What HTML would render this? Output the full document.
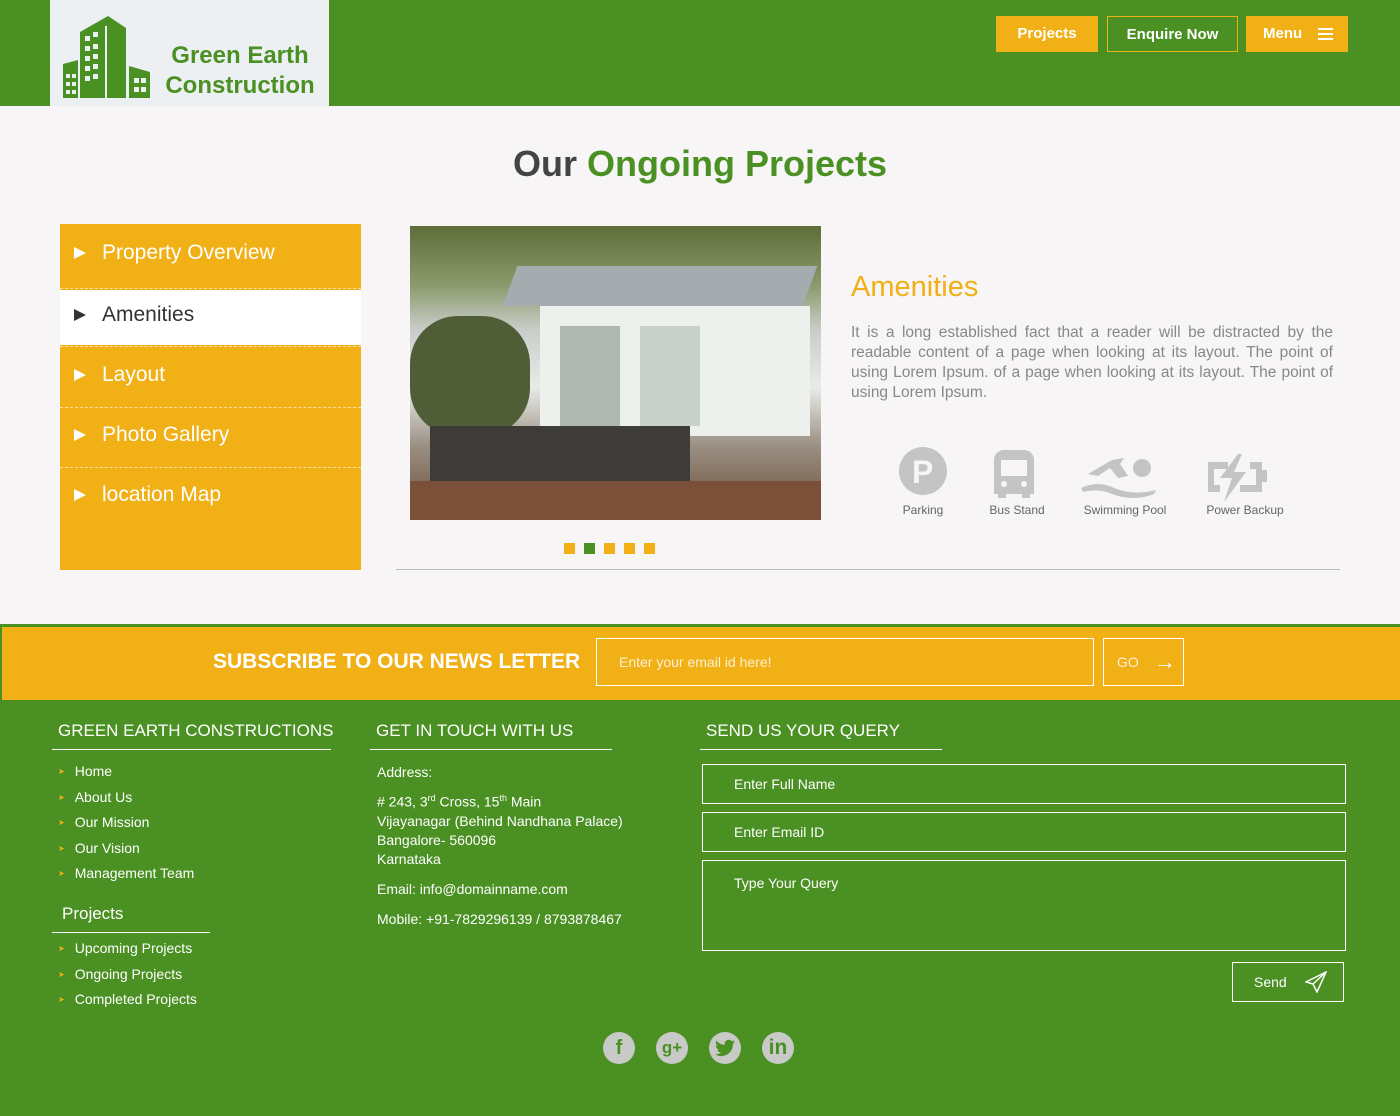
<!DOCTYPE html>
<html><head><meta charset="utf-8"><style>
*{margin:0;padding:0;box-sizing:border-box}
body{width:1400px;height:1116px;background:#f7f5f6;font-family:"Liberation Sans",sans-serif;position:relative;overflow:hidden}
.a{position:absolute}
.g{background:#4a9022}.y{background:#f0b016}
.btn{position:absolute;top:16px;height:36px;color:#fff;font-size:15px;font-weight:bold;line-height:36px;text-align:center}
.side div{position:absolute;left:0;width:301px;color:#fff;font-size:21px;padding-left:42px}
.side div:before{content:"";position:absolute;left:14px;top:50%;margin-top:-6px;border-left:12px solid #fff;border-top:6px solid transparent;border-bottom:6px solid transparent}
.dash{position:absolute;left:60px;width:301px;border-top:1px dashed #fbe0a0}
.fh{position:absolute;color:#fff;font-size:17px;padding-bottom:8px;border-bottom:1px solid #fff;white-space:nowrap}
.fl{position:absolute;color:#fff;font-size:14px;line-height:24.5px;list-style:none}
.fl li:before{content:"➤";color:#f0b016;font-size:8px;margin-right:10px;vertical-align:2px}
.inp{position:absolute;border:1px solid #fff;color:#fff;font-size:14px;padding-left:31px}
.am{position:absolute;top:503px;font-size:12px;color:#666;text-align:center;width:100px}
.soc{position:absolute;top:1032px;width:32px;height:32px;border-radius:50%;background:#c8cac8;color:#4a9022;font-weight:bold;text-align:center;line-height:32px;font-size:20px}
</style></head><body>
<div class="a g" style="left:0;top:0;width:1400px;height:106px"></div>
<div class="a" style="left:50px;top:0;width:279px;height:106px;background:#edf0f3"></div>
<svg class="a" style="left:60px;top:14px" width="92" height="86" viewBox="0 0 92 86" fill="#4a9022">
<path d="M3 50 L18 46 V84 H3Z"/>
<path d="M20 18 L48 2 L66 14 V84 H20Z"/>
<path d="M69 52 L90 58 V84 H69Z"/>
<g fill="#edf0f3"><rect x="25" y="22" width="5" height="5"/><rect x="33" y="18" width="5" height="5"/><rect x="25" y="32" width="5" height="5"/><rect x="33" y="30" width="5" height="5"/><rect x="25" y="42" width="5" height="5"/><rect x="33" y="40" width="5" height="5"/><rect x="25" y="52" width="5" height="5"/><rect x="33" y="50" width="5" height="5"/><rect x="25" y="62" width="5" height="5"/><rect x="33" y="60" width="5" height="5"/><rect x="45" y="12" width="2" height="72"/><rect x="6" y="60" width="4" height="4"/><rect x="12" y="60" width="4" height="4"/><rect x="6" y="68" width="4" height="4"/><rect x="12" y="68" width="4" height="4"/><rect x="6" y="76" width="4" height="4"/><rect x="12" y="76" width="4" height="4"/><rect x="74" y="64" width="5" height="5"/><rect x="81" y="64" width="5" height="5"/><rect x="74" y="73" width="5" height="5"/><rect x="81" y="73" width="5" height="5"/></g></svg>
<div class="a" style="left:158px;top:41px;width:164px;text-align:center;color:#4a9022;font-weight:bold;font-size:24px;line-height:30px">Green Earth<br>Construction</div>
<div class="btn y" style="left:996px;width:102px">Projects</div>
<div class="btn" style="left:1107px;width:131px;border:1px solid #f0b016">Enquire Now</div>
<div class="btn y" style="left:1246px;width:102px;text-align:left;padding-left:17px">Menu<span style="position:absolute;left:72px;top:12px;width:15px;height:12px;border-top:2px solid #fff;border-bottom:2px solid #fff"><span style="position:absolute;left:0;top:3px;width:15px;height:2px;background:#fff"></span></span></div>

<div class="a" style="left:0;top:143px;width:1400px;text-align:center;font-size:36px;font-weight:bold;color:#444">Our <span style="color:#4a9022">Ongoing Projects</span></div>

<div class="a y" style="left:60px;top:224px;width:301px;height:346px"></div>
<div class="a" style="left:60px;top:290px;width:301px;height:55px;background:#fff"></div>
<div class="side a" style="left:60px;top:0">
<div style="top:241px">Property Overview</div>
<div style="top:303px;color:#333">Amenities</div>
<div style="top:363px">Layout</div>
<div style="top:423px">Photo Gallery</div>
<div style="top:483px">location Map</div>
</div>
<style>.side div:nth-child(2):before{border-left-color:#333}</style>
<div class="dash" style="top:288px"></div><div class="dash" style="top:346px"></div><div class="dash" style="top:407px"></div><div class="dash" style="top:467px"></div>

<div class="a" style="left:410px;top:226px;width:411px;height:294px;overflow:hidden;background:linear-gradient(180deg,#5d6e3a 0%,#8a9a6a 20%,#c9ccc8 35%,#e8ebe8 55%,#9a8f82 75%,#6a4a35 100%)">
<div class="a" style="left:100px;top:40px;width:300px;height:40px;background:#a6abb0;transform:skewX(-20deg)"></div>
<div class="a" style="left:130px;top:80px;width:270px;height:130px;background:#eef0ee"></div>
<div class="a" style="left:150px;top:100px;width:60px;height:100px;background:#aeb8b0"></div>
<div class="a" style="left:230px;top:100px;width:60px;height:100px;background:#c8d0cc"></div>
<div class="a" style="left:0;top:90px;width:120px;height:120px;background:#4f5e36;border-radius:40%"></div>
<div class="a" style="left:20px;top:200px;width:260px;height:60px;background:#3d3c38"></div>
<div class="a" style="left:0;top:255px;width:411px;height:40px;background:#7a5038"></div>
</div>
<div class="a y" style="left:564px;top:543px;width:11px;height:11px"></div>
<div class="a g" style="left:584px;top:543px;width:11px;height:11px"></div>
<div class="a y" style="left:604px;top:543px;width:11px;height:11px"></div>
<div class="a y" style="left:624px;top:543px;width:11px;height:11px"></div>
<div class="a y" style="left:644px;top:543px;width:11px;height:11px"></div>
<div class="a" style="left:396px;top:569px;width:944px;height:1px;background:#bbb"></div>

<div class="a" style="left:851px;top:271px;color:#f0b016;font-size:29px">Amenities</div>
<div class="a" style="left:851px;top:323px;width:482px;color:#888;font-size:15.5px;line-height:20px;text-align:justify">It is a long established fact that a reader will be distracted by the readable content of a page when looking at its layout. The point of using Lorem Ipsum. of a page when looking at its layout. The point of using Lorem Ipsum.</div>
<svg class="a" style="left:898px;top:446px" width="400" height="56" fill="#c4c4c4">
<circle cx="25" cy="25" r="24"/><text x="14" y="37" font-size="32" font-weight="bold" fill="#f7f5f6" font-family="Liberation Sans">P</text>
<path d="M106 4h20a10 10 0 0 1 10 10v34h-40v-34a10 10 0 0 1 10-10z"/><rect x="100" y="44" width="8" height="8"/><rect x="124" y="44" width="8" height="8"/>
<rect x="103" y="14" width="26" height="16" fill="#f7f5f6"/><circle cx="106" cy="38" r="3" fill="#f7f5f6"/><circle cx="126" cy="38" r="3" fill="#f7f5f6"/>
<path d="M190 28 L214 14 L226 12 L222 18 L230 30 L220 32 L212 22 L200 30Z"/><circle cx="244" cy="22" r="9"/>
<path d="M183 42 Q200 34 216 42 Q236 50 258 44 L256 48 Q236 56 214 48 Q200 42 185 46Z"/>
<path d="M310 16h20v7h-14v16h6v7h-12z M352 16h12v8h5v12h-5v10h-22v-7h16v-16h-6z"/>
<path d="M340 8 L322 32 H334 L326 56 L348 26 H336 L344 8Z"/>
</svg>
<div class="am" style="left:873px">Parking</div>
<div class="am" style="left:967px">Bus Stand</div>
<div class="am" style="left:1075px">Swimming Pool</div>
<div class="am" style="left:1195px">Power Backup</div>

<div class="a g" style="left:0;top:624px;width:1400px;height:492px"></div>
<div class="a y" style="left:2px;top:627px;width:1398px;height:73px"></div>
<div class="a" style="left:213px;top:650px;color:#fff;font-size:21px;font-weight:bold;white-space:nowrap">SUBSCRIBE TO OUR NEWS LETTER</div>
<div class="a" style="left:596px;top:638px;width:498px;height:48px;border:1px solid #fff;color:#fdf0d0;font-size:14px;line-height:46px;padding-left:22px">Enter your email id here!</div>
<div class="a" style="left:1103px;top:638px;width:81px;height:48px;border:1px solid #fff;color:#fdf0d0;font-size:14px;line-height:46px;padding-left:13px">GO <span style="position:absolute;left:50px;top:0;color:#fff;font-size:22px;font-weight:bold">→</span></div>

<div class="fh" style="left:52px;top:721px;width:279px;padding-left:6px">GREEN EARTH CONSTRUCTIONS</div>
<div class="fh" style="left:370px;top:721px;width:242px;padding-left:6px">GET IN TOUCH WITH US</div>
<div class="fh" style="left:700px;top:721px;width:242px;padding-left:6px">SEND US YOUR QUERY</div>
<ul class="fl" style="left:58px;top:759px"><li>Home</li><li>About Us</li><li>Our Mission</li><li>Our Vision</li><li>Management Team</li></ul>
<div class="fh" style="left:52px;top:904px;width:158px;padding-left:10px">Projects</div>
<ul class="fl" style="left:58px;top:936px"><li>Upcoming Projects</li><li>Ongoing Projects</li><li>Completed Projects</li></ul>
<div class="a" style="left:377px;top:763px;color:#fff;font-size:14px;line-height:19px">Address:<br><div style="margin-top:7px"># 243, 3<sup style="font-size:9px">rd</sup> Cross, 15<sup style="font-size:9px">th</sup> Main<br>Vijayanagar (Behind Nandhana Palace)<br>Bangalore- 560096<br>Karnataka</div><div style="margin-top:11px">Email: info@domainname.com</div><div style="margin-top:11px">Mobile: +91-7829296139 / 8793878467</div></div>
<div class="inp" style="left:702px;top:764px;width:644px;height:40px;line-height:38px">Enter Full Name</div>
<div class="inp" style="left:702px;top:812px;width:644px;height:40px;line-height:38px">Enter Email ID</div>
<div class="inp" style="left:702px;top:860px;width:644px;height:91px;padding-top:14px">Type Your Query</div>
<div class="inp" style="left:1232px;top:962px;width:112px;height:40px;line-height:38px;padding-left:21px">Send
<svg class="a" style="left:72px;top:8px" width="22" height="22" fill="none" stroke="#fff" stroke-width="1.5"><path d="M21 1 L1 11 L8 13 L12 21Z M21 1 L8 13"/></svg></div>
<div class="soc" style="left:603px">f</div>
<div class="soc" style="left:656px;font-size:17px">g+</div>
<div class="soc" style="left:709px"><svg width="20" height="18" style="margin-top:7px" viewBox="0 0 24 20" fill="#4a9022"><path d="M24 2.5a10 10 0 0 1-2.8.8A5 5 0 0 0 23.3.6a10 10 0 0 1-3.1 1.2A4.9 4.9 0 0 0 11.8 6.3 14 14 0 0 1 1.7 1.1a4.9 4.9 0 0 0 1.5 6.6A4.9 4.9 0 0 1 1 7.1a4.9 4.9 0 0 0 3.9 4.8 5 5 0 0 1-2.2.1 4.9 4.9 0 0 0 4.6 3.4A9.9 9.9 0 0 1 0 17.5 14 14 0 0 0 7.5 19.7c9 0 14-7.5 14-14v-.6A10 10 0 0 0 24 2.5z"/></svg></div>
<div class="soc" style="left:762px;font-size:21px">in</div>
</body></html>
